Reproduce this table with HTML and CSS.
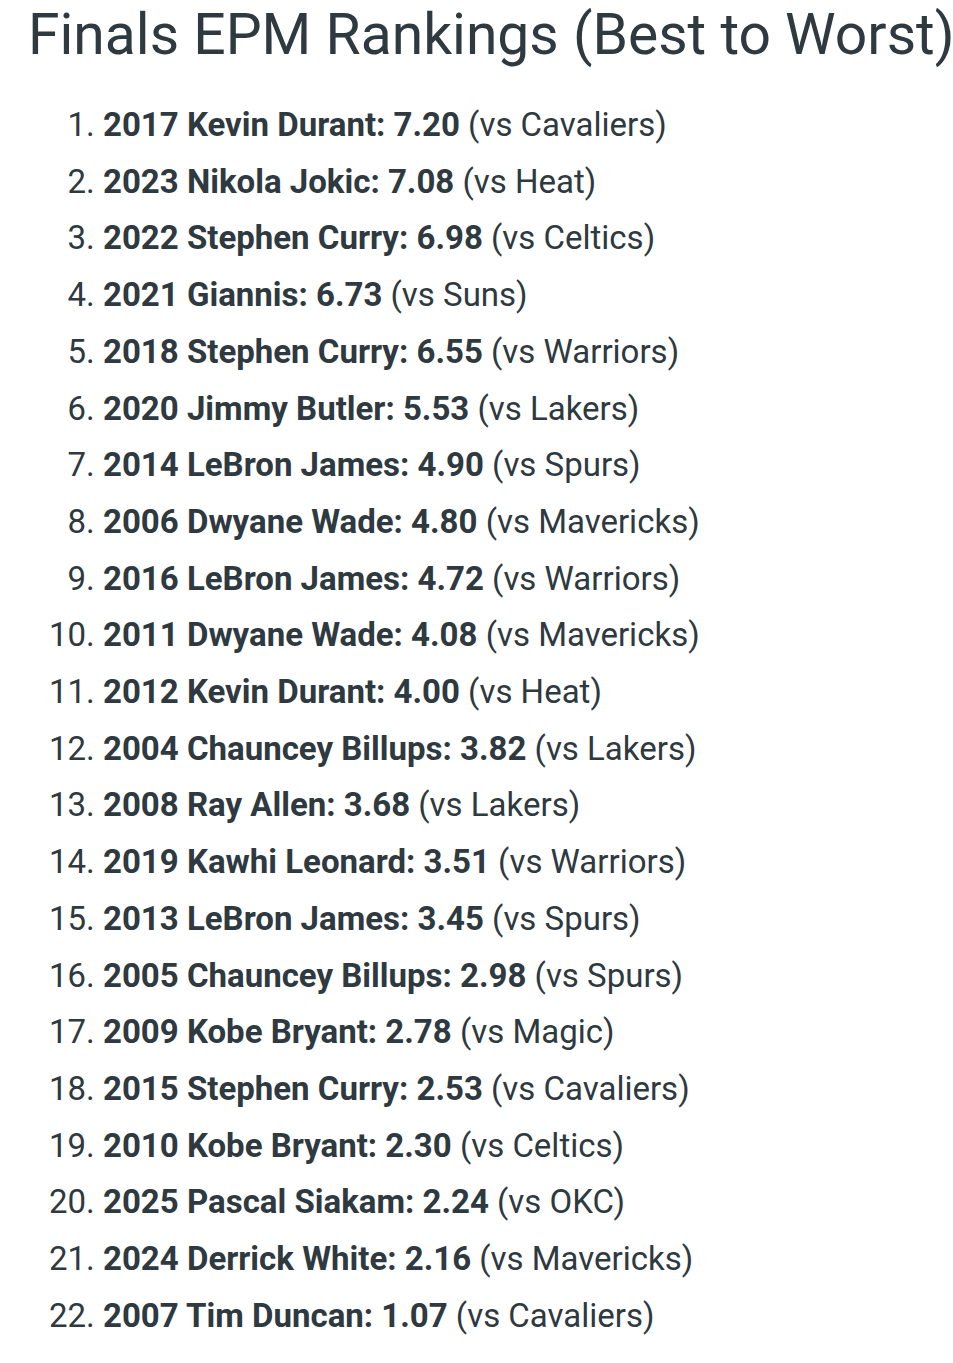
FILE: index.html
```html
<!DOCTYPE html>
<html>
<head>
<meta charset="utf-8">
<link rel="stylesheet" href="styles.css">
</head>
<body>
<div class="page">
  <h1 class="title">Finals EPM Rankings (Best to Worst):</h1>
  <ol class="rank-list">
    <li><b>2017 Kevin Durant: 7.20</b> (vs Cavaliers)</li>
    <li><b>2023 Nikola Jokic: 7.08</b> (vs Heat)</li>
    <li><b>2022 Stephen Curry: 6.98</b> (vs Celtics)</li>
    <li><b>2021 Giannis: 6.73</b> (vs Suns)</li>
    <li><b>2018 Stephen Curry: 6.55</b> (vs Warriors)</li>
    <li><b>2020 Jimmy Butler: 5.53</b> (vs Lakers)</li>
    <li><b>2014 LeBron James: 4.90</b> (vs Spurs)</li>
    <li><b>2006 Dwyane Wade: 4.80</b> (vs Mavericks)</li>
    <li><b>2016 LeBron James: 4.72</b> (vs Warriors)</li>
    <li><b>2011 Dwyane Wade: 4.08</b> (vs Mavericks)</li>
    <li><b>2012 Kevin Durant: 4.00</b> (vs Heat)</li>
    <li><b>2004 Chauncey Billups: 3.82</b> (vs Lakers)</li>
    <li><b>2008 Ray Allen: 3.68</b> (vs Lakers)</li>
    <li><b>2019 Kawhi Leonard: 3.51</b> (vs Warriors)</li>
    <li><b>2013 LeBron James: 3.45</b> (vs Spurs)</li>
    <li><b>2005 Chauncey Billups: 2.98</b> (vs Spurs)</li>
    <li><b>2009 Kobe Bryant: 2.78</b> (vs Magic)</li>
    <li><b>2015 Stephen Curry: 2.53</b> (vs Cavaliers)</li>
    <li><b>2010 Kobe Bryant: 2.30</b> (vs Celtics)</li>
    <li><b>2025 Pascal Siakam: 2.24</b> (vs OKC)</li>
    <li><b>2024 Derrick White: 2.16</b> (vs Mavericks)</li>
    <li><b>2007 Tim Duncan: 1.07</b> (vs Cavaliers)</li>
  </ol>
</div>
</body>
</html>
```
FILE: styles.css
```css
html, body {
  margin: 0;
  padding: 0;
  background: #ffffff;
}
body {
  font-family: Roboto, "Noto Sans", sans-serif;
  color: #2e3940;
  overflow: hidden;
}
.page {
  padding: 0 0 0 28px;
  width: 953px;
  box-sizing: border-box;
  overflow: hidden;
}
.title {
  margin: 0;
  padding-top: 0;
  font-size: 57px;
  font-weight: 400;
  line-height: 70px;
  white-space: nowrap;
  color: #2e3940;
}
.rank-list {
  margin: 27px 0 0 0;
  padding-left: 75px;
  font-size: 33px;
  line-height: 56.7px;
}
.rank-list b {
  font-weight: 700;
}
```
